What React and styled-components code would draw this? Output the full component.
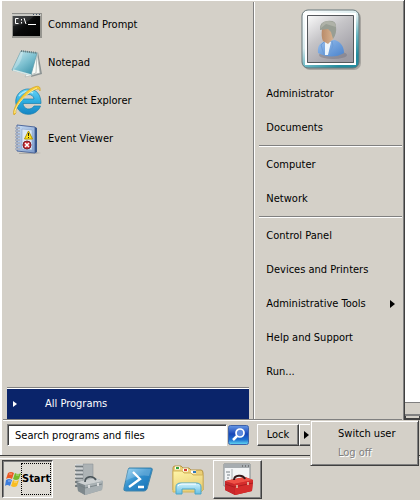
import React from "react";
import styled, { createGlobalStyle } from "styled-components";

const face = "#d4d0c8";
const shade = "#808080";
const dark = "#404040";
const navy = "#0a246a";

const GlobalStyle = createGlobalStyle`
  * { box-sizing: border-box; }
  body {
    margin: 0;
    background: ${face};
    color: #000;
    font: 11px/16px Tahoma, "DejaVu Sans Condensed", "Noto Sans", sans-serif;
  }
  button, input { font: inherit; color: inherit; }
  svg { display: block; flex: none; }
`;

const Desktop = styled.div`
  min-height: 100vh;
  display: flex;
  flex-direction: column;
  background: ${face};
  overflow: hidden;
`;

const Workspace = styled.div`
  flex: 1;
  display: flex;
`;

const Menu = styled.main`
  flex: 1;
  display: flex;
  flex-direction: column;
  border-right: 1px solid ${dark};
  box-shadow: inset 2px 1px 0 #fff, inset -1px 0 0 ${shade};
  padding: 2px 2px 0 3px;
`;

const Columns = styled.div`
  flex: 1;
  display: grid;
  grid-template-columns: 251fr 149fr;
  border-bottom: 1px solid ${shade};
`;

const Programs = styled.nav`
  display: flex;
  flex-direction: column;
  padding: 4px 4px 0;
`;

const Program = styled.button`
  display: flex;
  align-items: center;
  gap: 5px;
  height: 38px;
  padding: 0 0 0 4px;
  border: 0;
  background: none;
  text-align: left;
`;

const AllPrograms = styled.button`
  display: flex;
  align-items: center;
  gap: 28px;
  height: 31px;
  margin-top: auto;
  padding: 0 0 0 6px;
  border: 0;
  border-top: 1px solid #fff;
  background: ${navy};
  color: #fff;
  text-align: left;
  box-shadow: 0 -1px 0 ${shade};
`;

const Places = styled.nav`
  display: flex;
  flex-direction: column;
  border-left: 1px solid ${shade};
  box-shadow: inset 1px 0 0 #fff;
  padding: 6px 0 0 5px;
`;

const Avatar = styled.div`
  align-self: center;
  height: 69px;
`;

const Place = styled.a`
  display: flex;
  align-items: center;
  justify-content: space-between;
  height: 34px;
  padding: 0 7px 0 7px;
  color: inherit;
  text-decoration: none;
`;

const Divider = styled.hr`
  width: 100%;
  height: 3px;
  margin: 0;
  border: 0;
  border-top: 1px solid ${shade};
  background: linear-gradient(#fff 1px, transparent 1px);
`;

const Footer = styled.footer`
  display: flex;
  align-items: flex-start;
  height: 35px;
  padding: 4px 0 0 4px;
  box-shadow: inset 0 1px 0 #fff;
`;

const Search = styled.form`
  display: flex;
  gap: 1px;
  flex: 0 0 242px;
`;

const SearchBox = styled.input`
  flex: 1;
  min-width: 0;
  height: 22px;
  padding: 0 7px;
  border: 1px solid;
  border-color: ${shade} #fff #fff ${shade};
  box-shadow: inset 1px 1px 0 ${dark};
  background: #fff;
  border-radius: 0;
  outline: 0;
  &::placeholder { color: #000; opacity: 1; }
`;

const SearchButton = styled.button`
  padding: 0;
  border: 0;
  background: none;
`;

const Power = styled.div`
  position: relative;
  display: flex;
  margin-left: 8px;
`;

const RaisedButton = styled.button`
  display: flex;
  align-items: center;
  justify-content: center;
  width: ${(p) => p.$width}px;
  height: 22px;
  padding: 0;
  background: ${face};
  border: 1px solid;
  border-color: #fff ${dark} ${dark} #fff;
  box-shadow: inset -1px -1px 0 ${shade};
`;

const Popup = styled.div`
  position: absolute;
  z-index: 2;
  left: 53px;
  top: -4px;
  width: 109px;
  padding: 3px 2px;
  background: ${face};
  border: 1px solid;
  border-color: ${face} ${dark} ${dark} ${face};
  box-shadow: inset 1px 1px 0 #fff, inset -1px -1px 0 ${shade};
`;

const PopupItem = styled.button`
  display: block;
  width: 100%;
  height: 19px;
  padding: 0 0 0 25px;
  border: 0;
  background: none;
  text-align: left;
  white-space: nowrap;
  &:disabled { color: ${shade}; text-shadow: 1px 1px 0 #fff; }
`;

const Behind = styled.aside`
  flex: 0 0 15px;
  display: flex;
  flex-direction: column;
  padding-bottom: 36px;
`;

const Page = styled.div`
  flex: 1;
  background: #fff;
`;

const StatusBar = styled.div`
  height: 14px;
  border-top: 1px solid ${shade};
  border-bottom: 2px solid ${shade};
  box-shadow: 0 3px 0 -1px ${face}, 0 4px 0 0 ${dark};
  background: ${face};
  margin-bottom: 3px;
`;

const Taskbar = styled.nav`
  display: flex;
  align-items: center;
  height: 45px;
  padding: 2px 0 0 2px;
  border-top: 1px solid ${dark};
  box-shadow: inset 0 2px 0 ${face}, inset 0 3px 0 #fff;
`;

const StartButton = styled.button`
  display: flex;
  align-items: center;
  width: 51px;
  height: 38px;
  padding: 2px 1px 2px 2px;
  border: 1px solid;
  border-color: ${dark} #fff #fff ${dark};
  box-shadow: inset 1px 1px 0 ${shade};
  background: #dedbd4;
  font: bold 11px/30px Tahoma, "DejaVu Sans Condensed", sans-serif;
`;

const StartLabel = styled.span`
  border: 1px dotted #000;
`;

const Task = styled.button`
  display: flex;
  align-items: center;
  justify-content: center;
  width: 49px;
  height: 39px;
  padding: 0;
  border: 1px solid;
  border-color: ${(p) => (p.$open ? `#fff ${dark} ${dark} #fff` : "transparent")};
  box-shadow: ${(p) => (p.$open ? `inset -1px -1px 0 ${shade}` : "none")};
  background: none;
`;

const Tasks = styled.div`
  display: flex;
  margin-left: 10px;
  gap: 1px;
`;

const Arrow = ({ color = "#000" }) => (
  <svg width="5" height="8" viewBox="0 0 5 8" aria-hidden="true">
    <path d="M0 0v8l5-4z" fill={color} />
  </svg>
);

const SmallArrow = () => (
  <svg width="4" height="6" viewBox="0 0 4 6" aria-hidden="true">
    <path d="M0 0v6l4-3z" fill="#fff" />
  </svg>
);

const PromptIcon = () => (
  <svg width="32" height="32" viewBox="0 0 32 32" aria-hidden="true">
    <defs>
      <linearGradient id="cmd" x2="1" y2="1">
        <stop stopColor="#34373a" /><stop offset=".5" stopColor="#080909" /><stop offset="1" stopColor="#000" />
      </linearGradient>
    </defs>
    <path d="M1 4h30v25H1z" fill="#96958f" />
    <path d="M1 4h29v3H1z" fill="#c9c9c4" />
    <path d="M1 4.500h29" stroke="#8b8b88" />
    <path d="M22 5.500h1m2 0h1m2 0h1" stroke="#45566b" />
    <path d="M2 7h27v20H2z" fill="url(#cmd)" />
    <path d="M2 17Q15 16 23 7H2z" fill="#fff" opacity=".1" />
    <path d="M7.500 9.500h-3v5h3M10.500 10v1.500M10.500 13v1.500M13 9l2 6M17 15.500h8" fill="none" stroke="#fff" />
  </svg>
);

const NotepadIcon = () => (
  <svg width="32" height="32" viewBox="0 0 32 32" aria-hidden="true">
    <defs>
      <linearGradient id="note" x2=".8" y2="1">
        <stop stopColor="#d5f0f4" /><stop offset=".55" stopColor="#7cc0d0" /><stop offset="1" stopColor="#3c91a8" />
      </linearGradient>
    </defs>
    <path d="M27 5l4 22-11 3z" fill="#8b9292" />
    <path d="M26 5l3 21-15 4z" fill="#f9fbf7" stroke="#a9aeac" strokeWidth=".6" />
    <path d="M26 6l-1 20-6 2" fill="none" stroke="#c0c7c4" />
    <path d="M10 4l16 2-6 22L1 23z" fill="url(#note)" stroke="#609aa6" strokeWidth=".7" />
    <path d="M10 4L1 23q9-3 11-18z" fill="#fff" opacity=".25" />
    <path d="M2 23l18 5" stroke="#d5e6e6" strokeWidth="1.500" />
    <path d="M10 4l16 2" stroke="#687d80" strokeWidth="2" strokeDasharray="1 1" />
  </svg>
);

const ExplorerIcon = () => (
  <svg width="32" height="32" viewBox="0 0 32 32" aria-hidden="true">
    <defs>
      <linearGradient id="ie" x2="0" y2="1">
        <stop stopColor="#69d4f7" /><stop offset=".5" stopColor="#2cacdf" /><stop offset="1" stopColor="#1685c4" />
      </linearGradient>
    </defs>
    <path fillRule="evenodd" d="M30 18.500H12c.4 6 8 7.500 11 2.500h6.500C26 31 12 32 7 24 1 14 8 4 17 4c9 0 13 6 13 14.500zM12 14h11c-.5-6-10-6-11 0z" fill="url(#ie)" stroke="#147eae" strokeWidth=".7" />
    <path d="M8 11q6-7 14-3" fill="none" stroke="#bdf0ff" strokeWidth="1.500" opacity=".8" />
    <path d="M3 30C0 25 11 8 21 3c6-3 9-2 8 3-1-3-4-2-8 0C12 11 3 24 5 28z" fill="#f6cc35" stroke="#cd9b20" strokeWidth=".6" />
    <path d="M4 28C3 22 16 7 26 3" fill="none" stroke="#fff0a0" />
  </svg>
);

const EventIcon = () => (
  <svg width="32" height="32" viewBox="0 0 32 32" aria-hidden="true">
    <defs>
      <linearGradient id="event" x2="1" y2="1">
        <stop stopColor="#c7dcf4" /><stop offset="1" stopColor="#7d9bcb" />
      </linearGradient>
    </defs>
    <path d="M24 29l6 1-6 1H8v-1z" fill="#777" opacity=".4" />
    <path d="M6 2l18 2v26L6 28z" fill="url(#event)" stroke="#526b9d" />
    <path d="M24 4l2 1v24l-2 1z" fill="#35558c" />
    <path d="M11 6l10 1v20l-10-1z" fill="#dce8f5" stroke="#8ba6cd" strokeWidth=".6" />
    <path d="M4 5h5M4 8h5M4 11h5M4 14h5M4 17h5M4 20h5M4 23h5M4 26h5" stroke="#fff" strokeWidth="2" />
    <path d="M4 5h5M4 8h5M4 11h5M4 14h5M4 17h5M4 20h5M4 23h5M4 26h5" stroke="#576480" />
    <path d="M17.500 8l4 8h-8z" fill="#ffe21c" stroke="#b29400" />
    <path d="M17.500 10v3m0 1v1" stroke="#222" />
    <circle cx="16" cy="22" r="4" fill="#c92d34" stroke="#7b1c26" />
    <path d="M14 20l4 4m0-4l-4 4" stroke="#fff" strokeWidth="1.500" />
  </svg>
);

const UserIcon = () => (
  <svg width="60" height="62" viewBox="0 0 60 62" role="img" aria-label="Administrator account picture">
    <defs>
      <linearGradient id="frame" x2=".6" y2="1">
        <stop stopColor="#fff" /><stop offset=".5" stopColor="#d9ebed" /><stop offset=".75" stopColor="#65b4c0" /><stop offset="1" stopColor="#238c9e" />
      </linearGradient>
      <linearGradient id="back" x2=".7" y2="1">
        <stop stopColor="#fafafa" /><stop offset=".45" stopColor="#c6c5c8" /><stop offset="1" stopColor="#9d9ba3" />
      </linearGradient>
      <linearGradient id="shirt" x2="1" y2="1">
        <stop stopColor="#9ac0ed" /><stop offset="1" stopColor="#4a83cc" />
      </linearGradient>
      <linearGradient id="skin"><stop stopColor="#b98b69" /><stop offset="1" stopColor="#dcb896" /></linearGradient>
    </defs>
    <rect x="2" y="3" width="58" height="59" rx="7" fill="#555" opacity=".35" />
    <rect x="1" y="2" width="57" height="58" rx="6" fill="url(#frame)" stroke="#67777a" />
    <path d="M5 6h49v50H5z" fill="none" stroke="#fff" strokeWidth="2" />
    <path d="M6.500 7.500h46v47h-46z" fill="url(#back)" stroke="#55585c" />
    <ellipse cx="32" cy="47" rx="14" ry="4" fill="#686879" opacity=".4" />
    <path d="M17 45c-1-8 3-11 8-12l9-1c6 2 9 7 9 13q-12 7-26 0z" fill="url(#shirt)" />
    <path d="M24 33l6 1-3 13h-3z" fill="#edf5fb" />
    <path d="M24 33l-4 4 3 10m8-14l1 5-4 9" fill="none" stroke="#6c9cd6" />
    <path d="M21 21q-1 8 1 12l5 3 5-5 2-9-3-6z" fill="url(#skin)" />
    <path d="M19 22q-1-8 7-9 9-1 9 5 1 8-3 13l-2-7-3-3z" fill="#989e94" />
    <path d="M20 20l5-4 10 3q0-6-8-6-7 0-7 7z" fill="#afb2a8" />
  </svg>
);

const SearchIcon = () => (
  <svg width="21" height="22" viewBox="0 0 21 22" aria-hidden="true">
    <defs>
      <linearGradient id="find" x2="0" y2="1">
        <stop stopColor="#6798e5" /><stop offset=".45" stopColor="#1746b8" /><stop offset=".75" stopColor="#1e72d1" /><stop offset="1" stopColor="#69dff5" />
      </linearGradient>
    </defs>
    <rect x=".5" y="1.500" width="20" height="19" rx="2" fill="url(#find)" stroke="#3d62aa" />
    <circle cx="12" cy="9" r="4" fill="#5c88dc" stroke="#fff" strokeWidth="1.700" />
    <path d="M9 12l-4 4" stroke="#fff" strokeWidth="2.500" />
  </svg>
);

const FlagIcon = () => (
  <svg width="16" height="17" viewBox="0 0 16 17" aria-hidden="true">
    <path d="M3 2q3-2 6 0L7 8Q4 6 1 8z" fill="#ec5a24" />
    <path d="M10 2q3 2 6 0l-2 6q-3 2-6 0z" fill="#76b82a" />
    <path d="M1 9q3-2 6 0l-2 6q-3-2-5 0z" fill="#3d7ddd" />
    <path d="M8 9q3 2 6 0l-2 6q-3 2-6 0z" fill="#f8bd22" />
    <path d="M4 3l3 0M11 4h3M3 10l3 0M9 11h3" stroke="#fff" opacity=".5" />
  </svg>
);

const ServerIcon = () => (
  <svg width="32" height="34" viewBox="0 0 32 34" aria-hidden="true">
    <path d="M4 2h9v24l-9-1z" fill="#b1b6b8" />
    <path d="M11 2h10v20H11z" fill="#adb3b5" stroke="#8e9597" strokeWidth=".6" />
    <path d="M3 4h8M3 8h8M3 12h8M3 16h8M3 20h6M3 24h4" stroke="#5d676a" strokeWidth="1.500" />
    <path d="M3 3h8M3 7h8M3 11h8M3 15h8" stroke="#eceeef" />
    <path d="M5 20l18-4 8 3-1 9-17 5-7-4z" fill="#91999c" />
    <path d="M5 20l8 3v10l-7-4z" fill="#7e888c" />
    <path d="M13 23l18-4-1 9-17 5z" fill="#a8b0b3" />
    <path d="M5 20l18-4 8 3-18 4z" fill="#cdd1d2" />
    <path d="M13 20c0-6 8-7 11-2" fill="none" stroke="#4b5559" strokeWidth="1.700" />
    <path d="M7 23l6 3 17-4" fill="none" stroke="#727c80" strokeWidth=".8" />
    <path d="M17 23v3m9-5v3" stroke="#eee" strokeWidth="1.500" />
  </svg>
);

const ShellIcon = () => (
  <svg width="32" height="32" viewBox="0 0 32 32" aria-hidden="true">
    <defs>
      <linearGradient id="shell" x2="1" y2="1">
        <stop stopColor="#8ed2f4" /><stop offset=".45" stopColor="#318fcd" /><stop offset="1" stopColor="#126db3" />
      </linearGradient>
    </defs>
    <path d="M7 5h22q2 0 1 3l-5 18q-1 2-3 2H4q-3 0-2-3L6 7z" fill="url(#shell)" stroke="#4285aa" />
    <path d="M6 6h23l-2 7Q17 11 3 18z" fill="#fff" opacity=".2" />
    <path d="M11 9l7 7-11 8M16 24h6" fill="none" stroke="#fff" strokeWidth="2.300" />
  </svg>
);

const FolderIcon = () => (
  <svg width="34" height="34" viewBox="0 0 34 34" aria-hidden="true">
    <defs>
      <linearGradient id="folder" x2=".4" y2="1"><stop stopColor="#fff5a8" /><stop offset="1" stopColor="#e8cf79" /></linearGradient>
      <linearGradient id="stand" x2="0" y2="1"><stop stopColor="#d1f3fe" /><stop offset="1" stopColor="#67bee1" /></linearGradient>
    </defs>
    <path d="M2 6q0-2 2-2h6l2 2h6l2 2h10q2 0 2 3v17H2z" fill="#ebcf76" stroke="#b69545" />
    <path d="M4 6h5M12 8h5M20 10h5" stroke="#fff" strokeWidth="3" />
    <path d="M5 6h3" stroke="#34a43d" strokeWidth="2" />
    <path d="M13 8h3" stroke="#d43d32" strokeWidth="2" />
    <path d="M22 10h3" stroke="#3179bb" strokeWidth="2" />
    <path d="M2 9h9l2 2h7l2 2h10v15l-2 2H2z" fill="url(#folder)" stroke="#d2b55d" />
    <path d="M5 32v-7q0-4 5-4h15q5 0 5 4v7h-6v-5H11v5z" fill="url(#stand)" stroke="#4ba6ca" />
    <path d="M7 24q1-2 4-2h14" fill="none" stroke="#fff" />
  </svg>
);

const ToolboxIcon = () => (
  <svg width="34" height="34" viewBox="0 0 34 34" aria-hidden="true">
    <path d="M3 2h26v22H3z" fill="#f3f5f6" stroke="#7f878b" />
    <path d="M3 2h26v4H3z" fill="#a6acb0" />
    <path d="M21 4h1m2 0h1m2 0h1" stroke="#444" />
    <path d="M5 10h4m-3 3h3m-3 3h2" stroke="#788186" />
    <path d="M11 7v14" stroke="#a9b0b4" />
    <path d="M4 19l20-4 8 3-1 11-17 4-10-5z" fill="#ad1519" />
    <path d="M4 19l9 3 1 11-10-5z" fill="#c8282c" />
    <path d="M13 22l19-4-1 11-17 4z" fill="#d62d2c" />
    <path d="M4 19l20-4 8 3-19 4z" fill="#ef5146" />
    <path d="M13 18c0-5 9-6 11-1" fill="none" stroke="#351a1b" strokeWidth="2" />
    <path d="M4 22l9 3 19-4" fill="none" stroke="#a3191c" strokeWidth=".8" />
    <path d="M16 23v3m11-6v3" stroke="#e8cbb7" strokeWidth="1.500" />
  </svg>
);

const programs = [
  ["Command Prompt", PromptIcon],
  ["Notepad", NotepadIcon],
  ["Internet Explorer", ExplorerIcon],
  ["Event Viewer", EventIcon],
];

const placeGroups = [
  ["Administrator", "Documents"],
  ["Computer", "Network"],
  ["Control Panel", "Devices and Printers", "Administrative Tools", "Help and Support", "Run..."],
];

const tasks = [
  ["Server Manager", ServerIcon],
  ["Windows PowerShell", ShellIcon],
  ["Windows Explorer", FolderIcon],
  ["Administrative console", ToolboxIcon],
];

export default function App() {
  return (
    <Desktop>
      <GlobalStyle />
      <Workspace>
        <Menu>
          <Columns>
            <Programs aria-label="Programs">
              {programs.map(([name, Icon]) => (
                <Program key={name} type="button"><Icon />{name}</Program>
              ))}
              <AllPrograms type="button"><SmallArrow />All Programs</AllPrograms>
            </Programs>
            <Places aria-label="Places">
              <Avatar><UserIcon /></Avatar>
              {placeGroups.map((group, index) => (
                <React.Fragment key={group[0]}>
                  {index > 0 && <Divider />}
                  {group.map((name) => (
                    <Place key={name} href="#">
                      {name}
                      {name === "Administrative Tools" && <Arrow />}
                    </Place>
                  ))}
                </React.Fragment>
              ))}
            </Places>
          </Columns>
          <Footer>
            <Search onSubmit={(event) => event.preventDefault()}>
              <SearchBox type="text" aria-label="Search programs and files" placeholder="Search programs and files" />
              <SearchButton type="submit" aria-label="Search"><SearchIcon /></SearchButton>
            </Search>
            <Power>
              <RaisedButton type="button" $width={42}>Lock</RaisedButton>
              <RaisedButton type="button" $width={14} aria-label="More options"><Arrow /></RaisedButton>
              <Popup>
                <PopupItem type="button">Switch user</PopupItem>
                <PopupItem type="button" disabled>Log off</PopupItem>
              </Popup>
            </Power>
          </Footer>
        </Menu>
        <Behind>
          <Page />
          <StatusBar />
        </Behind>
      </Workspace>
      <Taskbar aria-label="Taskbar">
        <StartButton type="button"><FlagIcon /><StartLabel>Start</StartLabel></StartButton>
        <Tasks>
          {tasks.map(([name, Icon], index) => (
            <Task key={name} type="button" aria-label={name} $open={index === tasks.length - 1}><Icon /></Task>
          ))}
        </Tasks>
      </Taskbar>
    </Desktop>
  );
}
